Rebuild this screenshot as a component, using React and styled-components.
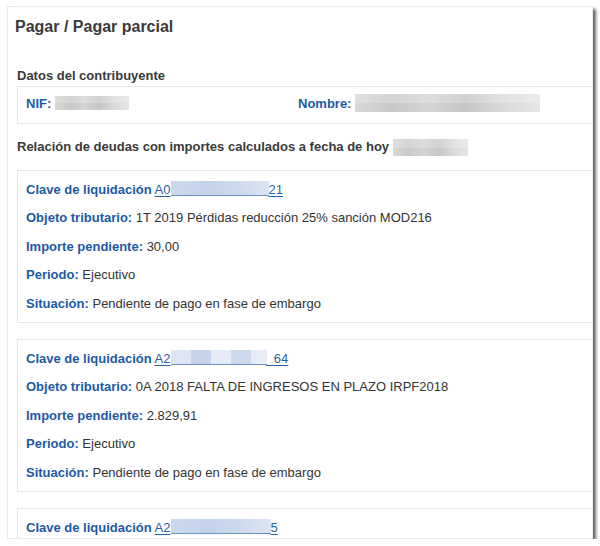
import React from 'react'
import styled, { createGlobalStyle } from 'styled-components'

const GlobalStyle = createGlobalStyle`
    html, body {
        margin: 0;
        padding: 0;
        background: #ffffff;
    }
    body {
        font-family: 'Liberation Sans', Arial, sans-serif;
        color: #333333;
    }
`

const deudas = [
    {
        clave: { start: 'A0', end: '21', blur: 98, gaps: false },
        objeto: '1T 2019 Pérdidas reducción 25% sanción MOD216',
        importe: '30,00',
        periodo: 'Ejecutivo',
        situacion: 'Pendiente de pago en fase de embargo',
    },
    {
        clave: { start: 'A2', end: '64', blur: 96, gaps: true },
        objeto: '0A 2018 FALTA DE INGRESOS EN PLAZO IRPF2018',
        importe: '2.829,91',
        periodo: 'Ejecutivo',
        situacion: 'Pendiente de pago en fase de embargo',
    },
    {
        clave: { start: 'A2', end: '5', blur: 100, gaps: false },
    },
]

function Clave({ clave }) {
    return (
        <ClaveLink href="#">
            {clave.start}
            <LinkBlur $width={clave.blur} $gaps={clave.gaps} />
            {clave.gaps ? '_' : ''}
            {clave.end}
        </ClaveLink>
    )
}

function Deuda({ deuda }) {
    return (
        <Card>
            <Row>
                <Label>Clave de liquidación</Label> <Clave clave={deuda.clave} />
            </Row>
            {deuda.objeto && (
                <>
                    <Row>
                        <Label>Objeto tributario:</Label> {deuda.objeto}
                    </Row>
                    <Row>
                        <Label>Importe pendiente:</Label> {deuda.importe}
                    </Row>
                    <Row>
                        <Label>Periodo:</Label> {deuda.periodo}
                    </Row>
                    <Row>
                        <Label>Situación:</Label> {deuda.situacion}
                    </Row>
                </>
            )}
        </Card>
    )
}

function App() {
    return (
        <>
            <GlobalStyle />
            <Panel>
                <Title>Pagar / Pagar parcial</Title>
                <Section>
                    <SectionTitle>Datos del contribuyente</SectionTitle>
                    <DataBox>
                        <Field>
                            <Label>NIF:</Label>
                            <Blur $width={74} $height={14} />
                        </Field>
                        <Field>
                            <Label>Nombre:</Label>
                            <Blur $width={185} $height={18} />
                        </Field>
                    </DataBox>
                </Section>
                <Section>
                    <SectionTitle>
                        Relación de deudas con importes calculados a fecha de hoy
                        <Blur $width={75} $height={17} />
                    </SectionTitle>
                    <CardList>
                        {deudas.map((d, i) => (
                            <Deuda key={i} deuda={d} />
                        ))}
                    </CardList>
                </Section>
            </Panel>
        </>
    )
}

const Panel = styled.div`
    box-sizing: border-box;
    margin: 6px 0 0 7px;
    width: 586px;
    height: 533px;
    overflow: hidden;
    background: #ffffff;
    border: 1px solid #ebebeb;
    box-shadow: 3px 3px 3px rgba(0, 0, 0, 0.6);
`
const Title = styled.h1`
    margin: 0;
    padding: 10px 0 0 7px;
    font-size: 16px;
    line-height: 20px;
    font-weight: bold;
    color: #3a3a3a;
`
const Section = styled.div`
    padding-left: 9px;
    width: 620px;
`
const SectionTitle = styled.h2`
    display: flex;
    align-items: center;
    margin: 0;
    font-size: 13px;
    line-height: 20px;
    font-weight: bold;
    color: #3a3a3a;
    ${Section}:first-of-type & {
        margin-top: 29px;
        margin-bottom: 0;
    }
    ${Section} + ${Section} & {
        margin-top: 13px;
        margin-bottom: 13px;
    }
`
const DataBox = styled.div`
    display: grid;
    grid-template-columns: 272px 1fr;
    align-items: center;
    height: 38px;
    box-sizing: border-box;
    padding: 0 0 4px 8px;
    border: 1px solid #e6e6e6;
`
const Field = styled.div`
    display: flex;
    align-items: center;
    font-size: 13px;
`
const Blur = styled.span`
    display: inline-block;
    width: ${(p) => p.$width}px;
    height: ${(p) => p.$height}px;
    margin-left: 4px;
    background:
        linear-gradient(180deg, rgba(255, 255, 255, 0.2) 0 50%, rgba(0, 0, 0, 0) 50% 100%),
        linear-gradient(90deg, #d8d8d8 0%, #c9c9c9 20%, #d4d4d4 40%, #c6c6c6 60%, #dadada 80%, #e6e6e6 100%);
`
const CardList = styled.div`
    display: flex;
    flex-direction: column;
    gap: 16px;
`
const Card = styled.div`
    box-sizing: border-box;
    height: 153px;
    padding: 5px 8px 4px;
    border: 1px solid #e6e6e6;
`
const Row = styled.div`
    font-size: 13px;
    line-height: 28.4px;
    color: #333333;
    white-space: nowrap;
`
const Label = styled.span`
    font-weight: bold;
    color: #1d5aa3;
`
const ClaveLink = styled.a`
    color: #2a62a8;
    text-decoration: underline;
    text-underline-offset: 2px;
`
const LinkBlur = styled.span`
    display: inline-block;
    width: ${(p) => p.$width}px;
    height: 14px;
    vertical-align: -2px;
    border-bottom: 1px solid #6e93c4;
    background: ${(p) =>
        p.$gaps
            ? 'linear-gradient(90deg, #dde6f2 0 20px, #c5d4e9 20px 40px, #e4ebf5 40px 60px, #ccd9ec 60px 80px, #e6edf6 80px 100%)'
            : 'linear-gradient(90deg, #cbd9ed 0%, #c3d3ea 40%, #cddaed 70%, #dbe4f2 100%)'};
`

export default App
